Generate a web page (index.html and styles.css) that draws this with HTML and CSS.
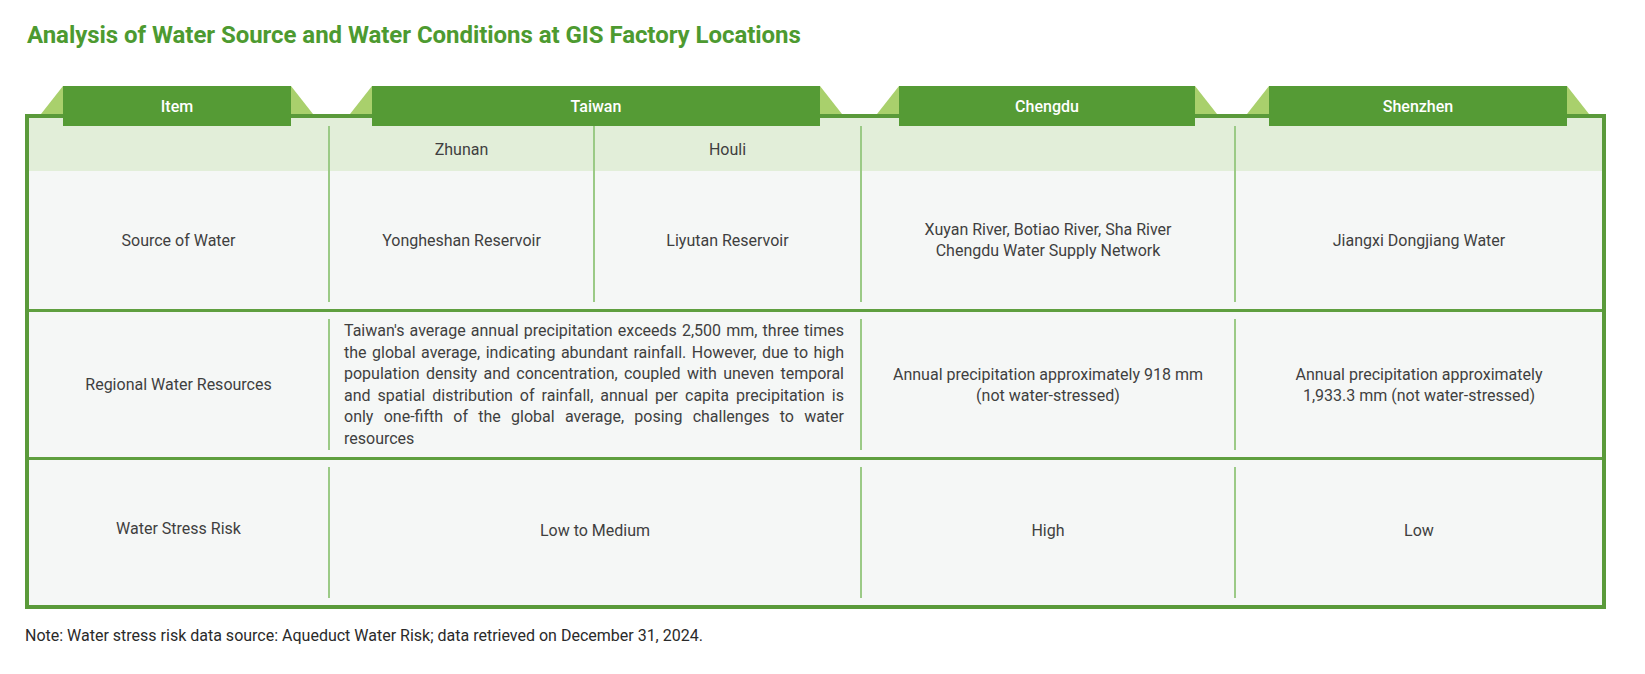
FILE: index.html
```html
<!DOCTYPE html>
<html lang="en">
<head>
<meta charset="utf-8">
<title>Analysis of Water Source and Water Conditions at GIS Factory Locations</title>
<link rel="stylesheet" href="styles.css">
</head>
<body>
<main class="page">
  <h1 class="title">Analysis of Water Source and Water Conditions at GIS Factory Locations</h1>

  <div class="tabs">
    <div class="tab tab-item">Item</div>
    <div class="tab tab-taiwan">Taiwan</div>
    <div class="tab tab-chengdu">Chengdu</div>
    <div class="tab tab-shenzhen">Shenzhen</div>
  </div>

  <div class="table">
    <div class="row row-source">
      <div class="cell sub"></div>
      <div class="cell sub">Zhunan</div>
      <div class="cell sub">Houli</div>
      <div class="cell sub"></div>
      <div class="cell sub"></div>

      <div class="cell body">Source of Water</div>
      <div class="cell body">Yongheshan Reservoir</div>
      <div class="cell body">Liyutan Reservoir</div>
      <div class="cell body">Xuyan River, Botiao River, Sha River<br>Chengdu Water Supply Network</div>
      <div class="cell body">Jiangxi Dongjiang Water</div>
    </div>

    <div class="row">
      <div class="cell body">Regional Water Resources</div>
      <div class="cell body span2"><p class="para">Taiwan's average annual precipitation exceeds 2,500 mm, three times the global average, indicating abundant rainfall. However, due to high population density and concentration, coupled with uneven temporal and spatial distribution of rainfall, annual per capita precipitation is only one-fifth of the global average, posing challenges to water resources</p></div>
      <div class="cell body">Annual precipitation approximately 918 mm<br>(not water-stressed)</div>
      <div class="cell body">Annual precipitation approximately<br>1,933.3 mm (not water-stressed)</div>
    </div>

    <div class="row row-risk">
      <div class="cell body lift">Water Stress Risk</div>
      <div class="cell body span2">Low to Medium</div>
      <div class="cell body">High</div>
      <div class="cell body">Low</div>
    </div>
  </div>

  <p class="note">Note: Water stress risk data source: Aqueduct Water Risk; data retrieved on December 31, 2024.</p>
</main>
</body>
</html>
```

FILE: styles.css
```css
html, body {
  margin: 0;
  padding: 0;
  background: #ffffff;
}

.page {
  padding: 20px 40px 0 25px;
  font-family: Roboto, "Liberation Sans", Arial, sans-serif;
  color: #3f3f3f;
}

.title {
  margin: 0;
  font-family: Roboto, "Liberation Sans", sans-serif;
  font-weight: 700;
  font-size: 24px;
  letter-spacing: -0.05px;
  line-height: 30px;
  color: #4d9a30;
  padding-left: 2px;
}

.tabs {
  display: grid;
  grid-template-columns: 303px 532px 374px 372px;
  margin-top: 36px;
  height: 28px;
  width: 1581px;
}

.tab {
  position: relative;
  z-index: 2;
  height: 40px;
  background: #559b35;
  color: #ffffff;
  font-size: 16px;
  font-weight: 500;
  display: flex;
  align-items: center;
  justify-content: center;
}

.tab::before,
.tab::after {
  content: "";
  position: absolute;
  top: 0;
  width: 22px;
  height: 28px;
  background: #a9d06c;
}

.tab::before {
  left: -22px;
  clip-path: polygon(100% 0, 100% 100%, 0 100%);
}

.tab::after {
  right: -22px;
  clip-path: polygon(0 0, 100% 100%, 0 100%);
}

.tab-item { margin: 0 37px 0 38px; }
.tab-taiwan { margin: 0 40px 0 44px; }
.tab-chengdu { margin: 0 39px 0 39px; }
.tab-shenzhen { margin: 0 39px 0 35px; }

.table {
  width: 1573px;
  border: 4px solid #5a9a3a;
  background: #f5f7f6;
}

.row {
  display: grid;
  grid-template-columns: 299px 265px 267px 374px 368px;
  padding: 7px 0;
  border-top: 3px solid #5f9f3f;
  min-height: 131px;
}

.row-source {
  border-top: 0;
  padding-top: 8px;
  grid-template-rows: 45px 131px;
  background: linear-gradient(#e2eed9 0 53px, #f5f7f6 53px);
}

.cell {
  display: flex;
  align-items: center;
  justify-content: center;
  text-align: center;
  font-size: 16px;
  line-height: 21px;
  border-left: 2px solid #9bca86;
}

.cell:first-child,
.row-source .cell:nth-child(5n+1) {
  border-left: 0;
}

.cell.sub {
  padding-top: 1px;
}

.row-source .cell.body {
  padding-top: 7px;
}

.row-risk .cell {
  padding-bottom: 4px;
}

.row-risk .cell.lift {
  padding-bottom: 9px;
}

.span2 {
  grid-column: span 2;
}

.para {
  margin: 0;
  padding: 0 16px 0 14px;
  text-align: justify;
  line-height: 21.5px;
}

.note {
  margin: 17px 0 0;
  font-size: 16px;
  color: #2a2a2a;
}
```
